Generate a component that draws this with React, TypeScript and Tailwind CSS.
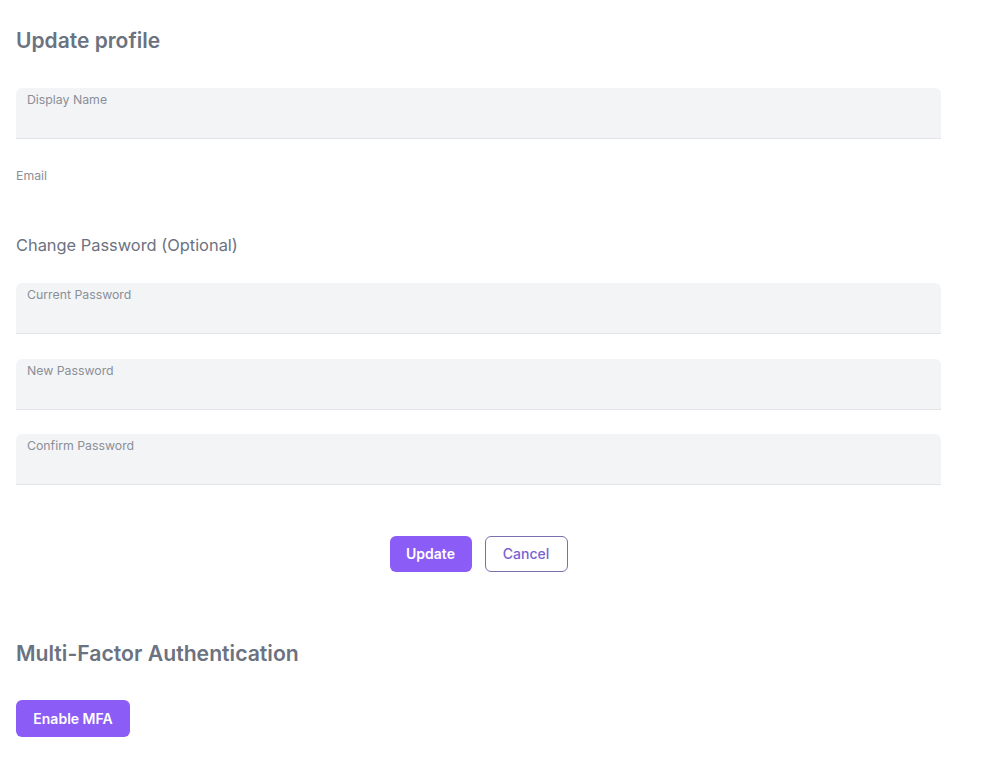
const FIELDS = ['Current Password', 'New Password', 'Confirm Password'];

function Field({ label, className = '' }: { label: string; className?: string }) {
  return (
    <div
      className={
        'h-[51px] rounded-t-md bg-[#f3f4f6] border-b border-[#e2e4e8] pl-[11px] pt-[4px] ' + className
      }
    >
      <div className="text-[12.3px] leading-4 text-[#8a8f98]">{label}</div>
    </div>
  );
}

export default function App() {
  return (
    <main
      className="min-h-[758px] bg-white px-4 pt-[27px]"
      style={{ fontFamily: 'Inter, "Noto Sans", sans-serif' }}
    >
      <div className="w-[925px]">
        <h1 className="text-[21px] leading-7 font-semibold text-[#6b7280]">Update profile</h1>

        <Field label="Display Name" className="mt-[33px]" />

        <div className="mt-[29px] text-[12.3px] leading-4 text-[#8a8f98]">Email</div>

        <h2 className="mt-[49px] text-[16.4px] leading-6 text-[#6b7280]">Change Password (Optional)</h2>

        <div className="mt-[26px] flex flex-col gap-[24.5px]">
          {FIELDS.map((f) => (
            <Field key={f} label={f} />
          ))}
        </div>

        <div className="mt-[51px] flex justify-center gap-[13px]">
          <button className="h-9 w-[82px] rounded-md bg-[#8b5cf6] text-sm font-semibold text-white">
            Update
          </button>
          <button className="h-9 w-[83px] rounded-md border border-[#7c6fb0] bg-white text-sm font-medium text-[#7a62d0]">
            Cancel
          </button>
        </div>

        <h2 className="mt-[67px] text-[21.2px] leading-7 font-semibold text-[#6b7280]">
          Multi-Factor Authentication
        </h2>

        <button className="mt-[33px] h-[37px] w-[114px] rounded-md bg-[#8b5cf6] text-sm font-semibold text-white">
          Enable MFA
        </button>
      </div>
    </main>
  );
}
